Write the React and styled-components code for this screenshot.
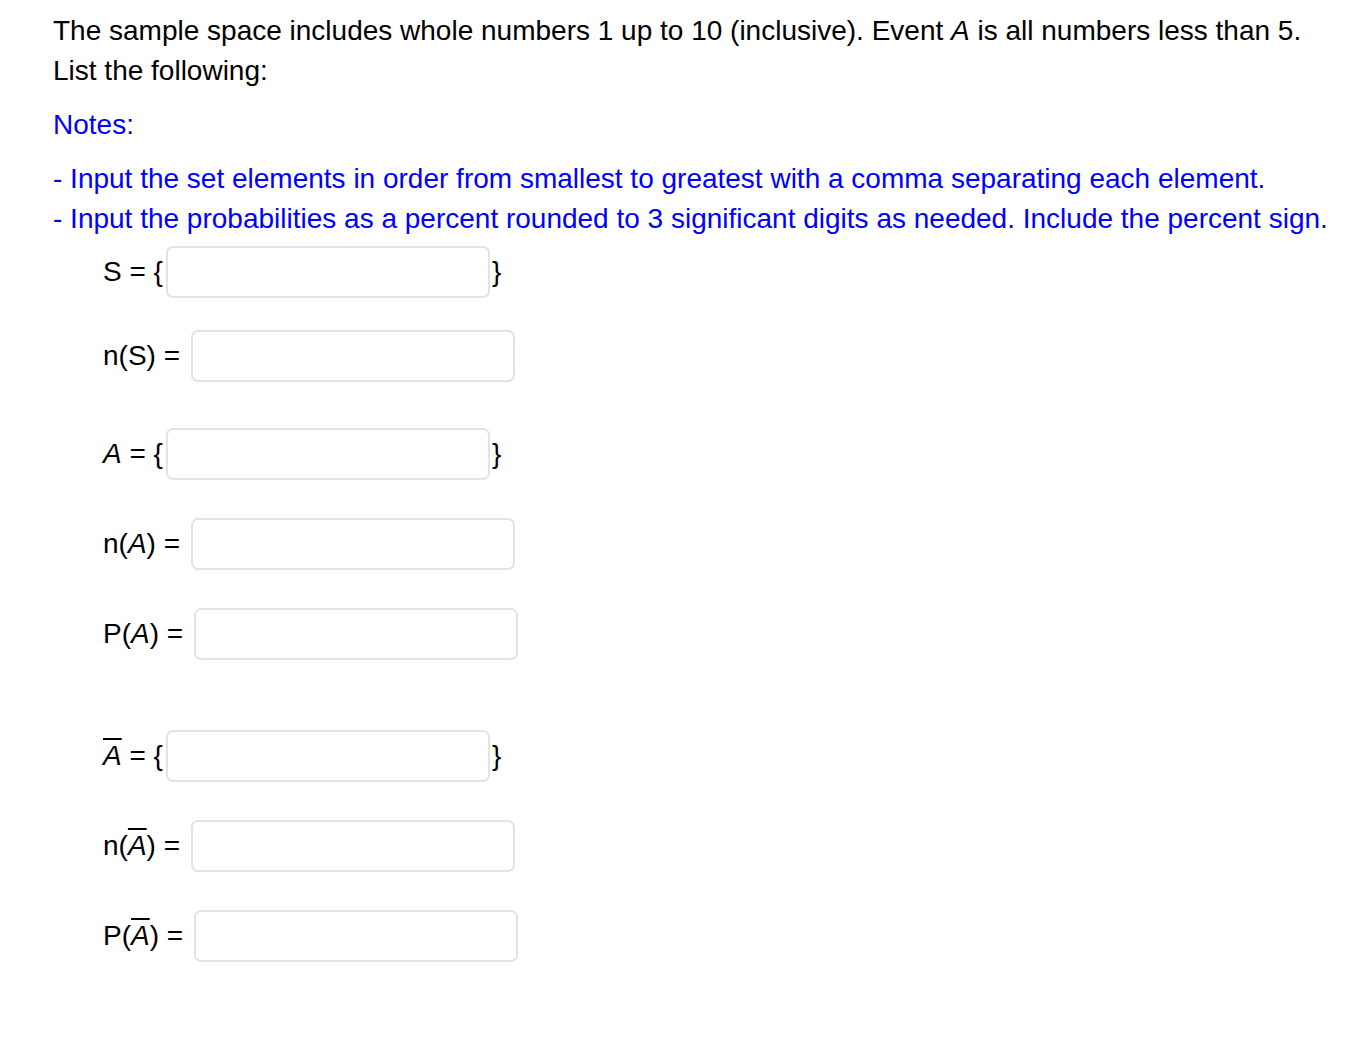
import React from "react";
import styled, { createGlobalStyle } from "styled-components";

const GlobalStyle = createGlobalStyle`
  body {
    margin: 0;
    background: #fff;
  }
`;

const Page = styled.div`
  font-family: "Liberation Sans", Arial, Helvetica, sans-serif;
  font-size: 28px;
  line-height: 40px;
  color: #000;
  padding: 11px 0 0 53px;
`;

const Para = styled.div`
  color: ${(p) => (p.$blue ? "#0000ff" : "#000")};
  margin-top: ${(p) => p.$top || 0}px;
  white-space: nowrap;
`;

const Row = styled.div`
  display: flex;
  align-items: center;
  margin-left: 50px;
  margin-top: ${(p) => p.$top}px;
`;

const Label = styled.span`
  white-space: pre;
`;

const Var = styled.i`
  font-style: italic;
  text-decoration: ${(p) => (p.$bar ? "overline" : "none")};
  text-decoration-thickness: 2px;
`;

const Field = styled.input`
  box-sizing: border-box;
  width: 324px;
  height: 52px;
  margin-left: ${(p) => p.$gap}px;
  border: 2px solid #e3e3e3;
  border-radius: 7px;
  background: #fff;
  outline: none;
`;

const Brace = styled.span`
  margin-left: 2px;
`;

const rows = [
  { top: 7, set: true, label: <>S = {"{"}</> },
  { top: 32, label: <>n(S) = </> },
  { top: 46, set: true, label: <><Var>A</Var> = {"{"}</> },
  { top: 38, label: <>n(<Var>A</Var>) = </> },
  { top: 38, label: <>P(<Var>A</Var>) = </> },
  { top: 70, set: true, label: <><Var $bar>A</Var> = {"{"}</> },
  { top: 38, label: <>n(<Var $bar>A</Var>) = </> },
  { top: 38, label: <>P(<Var $bar>A</Var>) = </> },
];

export default function App() {
  return (
    <Page>
      <GlobalStyle />
      <Para>
        The sample space includes whole numbers 1 up to 10 (inclusive). Event{" "}
        <Var>A</Var> is all numbers less than 5.
      </Para>
      <Para>List the following:</Para>
      <Para $blue $top={14}>Notes:</Para>
      <Para $blue $top={14}>
        - Input the set elements in order from smallest to greatest with a comma separating each element.
      </Para>
      <Para $blue>
        - Input the probabilities as a percent rounded to 3 significant digits as needed. Include the percent sign.
      </Para>
      {rows.map((r, i) => (
        <Row key={i} $top={r.top}>
          <Label>{r.label}</Label>
          <Field $gap={3} />
          {r.set && <Brace>{"}"}</Brace>}
        </Row>
      ))}
    </Page>
  );
}
